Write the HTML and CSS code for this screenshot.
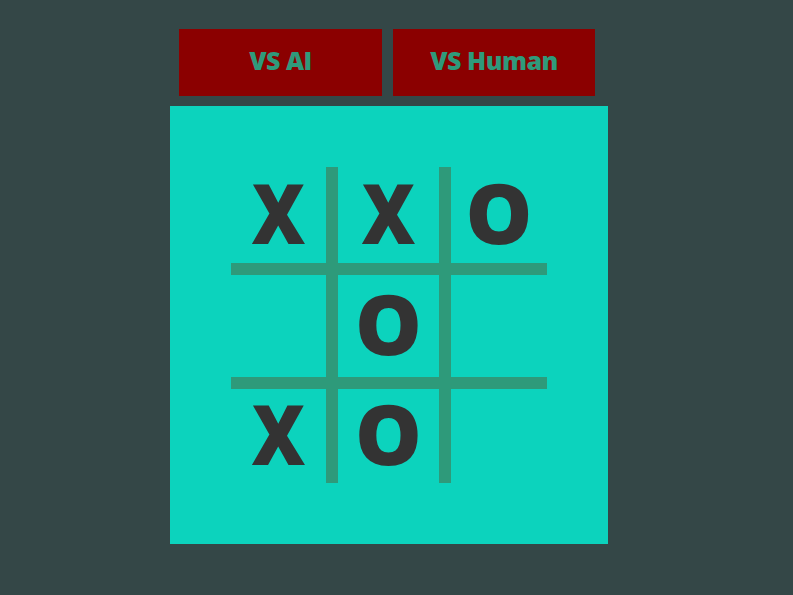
FILE: index.html
```html
<!DOCTYPE html>
<html>
<head>
<meta charset="utf-8">
<link rel="stylesheet" href="styles.css">
</head>
<body>
<div class="app">
  <div class="modes">
    <button class="mode">VS AI</button>
    <button class="mode">VS Human</button>
  </div>
  <div class="board">
    <div class="grid">
      <div class="cell"><span class="x">X</span></div>
      <div class="cell"><span class="x">X</span></div>
      <div class="cell"><span class="o">O</span></div>
      <div class="cell"></div>
      <div class="cell"><span class="o">O</span></div>
      <div class="cell"></div>
      <div class="cell"><span class="x">X</span></div>
      <div class="cell"><span class="o">O</span></div>
      <div class="cell"></div>
    </div>
  </div>
</div>
</body>
</html>
```
FILE: styles.css
```css
html, body {
  margin: 0;
  padding: 0;
  background: #344747;
  height: 100%;
}
.app {
  padding: 29px 0 0 170px;
  display: flex;
  flex-direction: column;
  align-items: flex-start;
}
.modes {
  display: flex;
  gap: 11px;
  margin-left: 9px;
  margin-bottom: 10px;
}
.mode {
  width: 203px;
  height: 67px;
  border: none;
  background: #8b0000;
  color: #2f9a7b;
  font-family: "Open Sans", sans-serif;
  font-weight: 800;
  font-size: 25px;
  letter-spacing: -0.5px;
  padding: 0 0 6px 0;
  margin: 0;
}
.mode + .mode { width: 202px; }
.board {
  width: 438px;
  height: 438px;
  box-sizing: border-box;
  padding: 61px;
  background: #0cd3bd;
}
.grid {
  display: grid;
  grid-template-columns: 95px 101px 96px;
  grid-template-rows: 96px 102px 94px;
  gap: 12px;
  background: #2e9a7a;
}
.cell {
  background: #0cd3bd;
  display: flex;
  align-items: center;
  justify-content: center;
  padding-bottom: 6px;
  font-family: "Open Sans", sans-serif;
  font-weight: 800;
  font-size: 84px;
  color: #333333;
  line-height: 1;
}
.x {
  display: inline-block;
  transform: scaleX(0.88);
}
.o {
  display: inline-block;
}
```
